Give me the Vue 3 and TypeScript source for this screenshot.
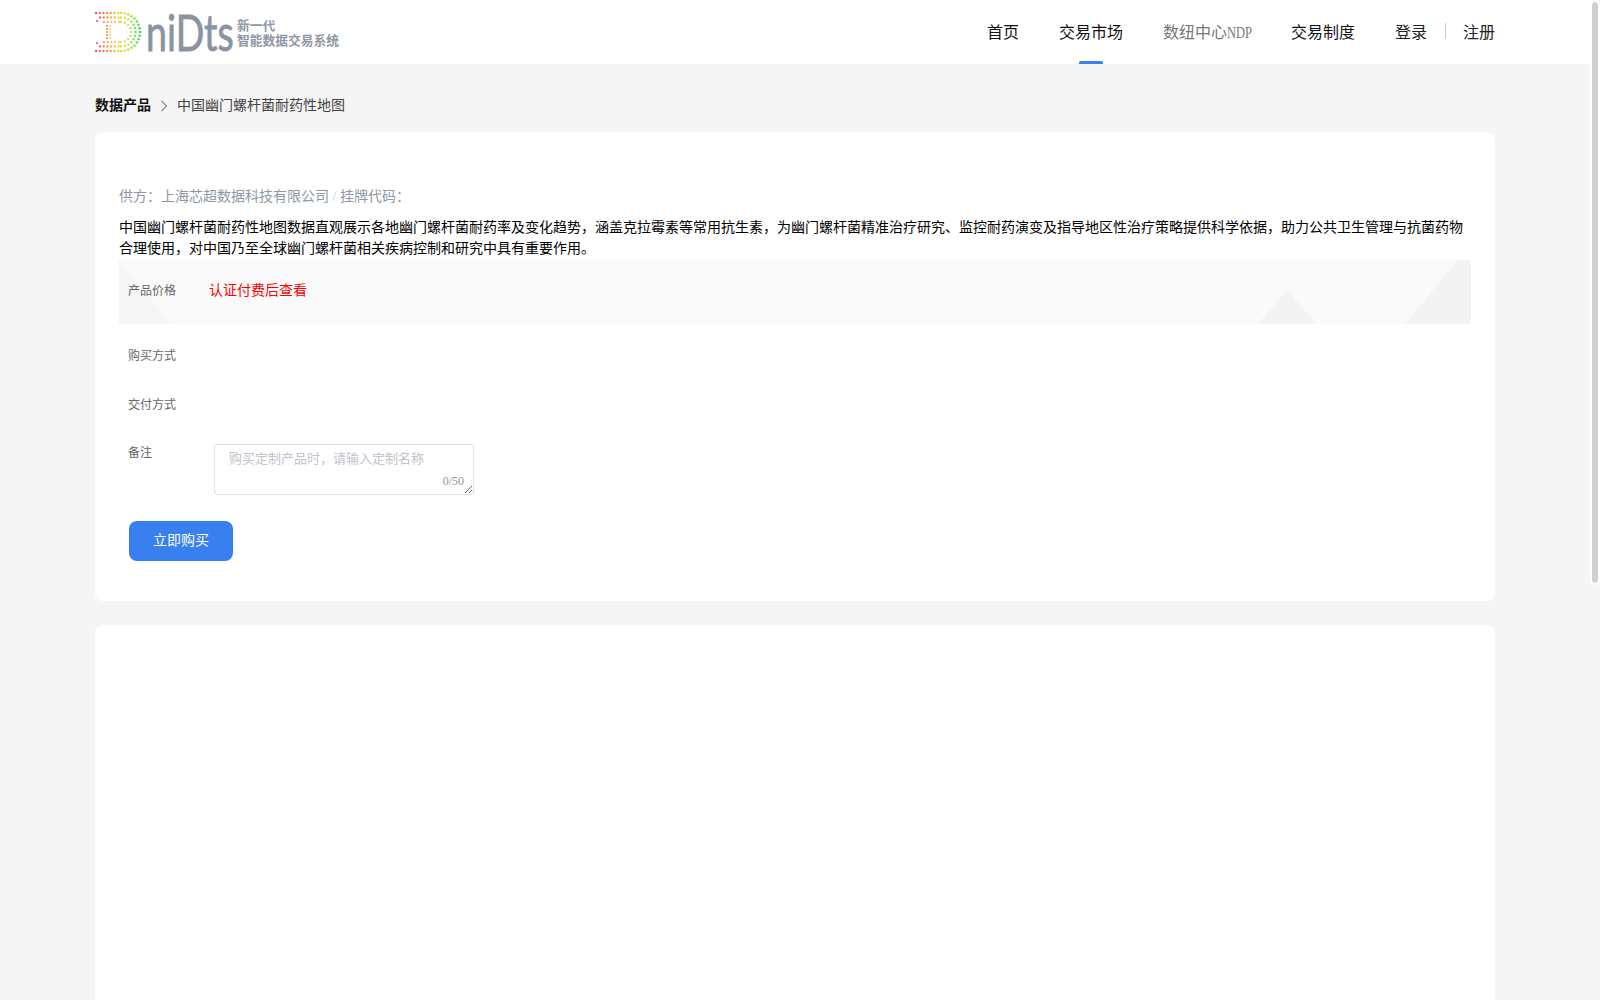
<script setup lang="ts">
interface Dot { x: number; y: number; r: number; c: string }

const stops: [number, number[]][] = [
  [0, [250, 70, 120]],
  [0.28, [250, 150, 70]],
  [0.55, [245, 215, 40]],
  [0.78, [170, 225, 50]],
  [1, [50, 220, 100]],
]
function colorAt(x: number): string {
  const t = Math.min(1, Math.max(0, (x - 1) / 44))
  for (let i = 1; i < stops.length; i++) {
    if (t <= stops[i][0]) {
      const [a, ca] = stops[i - 1]
      const [b, cb] = stops[i]
      const k = (t - a) / (b - a)
      const m = ca.map((v, j) => Math.round(v + (cb[j] - v) * k))
      return `rgb(${m[0]},${m[1]},${m[2]})`
    }
  }
  return 'rgb(50,220,100)'
}
const dots: Dot[] = []
function add(x: number, y: number, r: number) {
  dots.push({ x, y, r, c: colorAt(x) })
}
const cx = 26
const cy = 21
;[
  { rad: 19, from: 1, dot: 1.2 },
  { rad: 14.5, from: 5, dot: 1.15 },
  { rad: 10, from: 9, dot: 1.05 },
].forEach(({ rad, from, dot }) => {
  for (let x = from; x < cx; x += 3.7) {
    add(x, cy - rad, dot)
    add(x, cy + rad, dot)
  }
  const n = Math.round((Math.PI * rad) / 3.7)
  for (let i = 0; i <= n; i++) {
    const a = -Math.PI / 2 + (Math.PI * i) / n
    add(cx + rad * Math.cos(a), cy + rad * Math.sin(a), dot)
  }
})
for (let y = 15; y <= 27; y += 3) {
  add(12, y, 1)
  add(15, y, 0.8)
}
add(2, 10, 1.1)
add(2, 32, 1.1)
</script>

<template>
  <div class="page">
    <header class="topbar">
      <div class="logo">
        <svg class="logo-mark" width="48" height="42" viewBox="0 0 48 42">
          <circle v-for="(d, i) in dots" :key="i" :cx="d.x" :cy="d.y" :r="d.r" :fill="d.c" />
        </svg>
        <div class="logo-word"><span>niDts</span></div>
        <div class="logo-sub">
          <span>新一代</span>
          <span>智能数据交易系统</span>
        </div>
      </div>
      <nav class="nav">
        <a class="nav-item">首页</a>
        <a class="nav-item active">交易市场</a>
        <a class="nav-item muted">数纽中心<span class="narrow"><span>NDP</span></span></a>
        <a class="nav-item">交易制度</a>
      </nav>
      <div class="auth">
        <a>登录</a>
        <i class="sep"></i>
        <a>注册</a>
      </div>
    </header>

    <main class="main">
      <div class="crumbs">
        <b>数据产品</b>
        <svg class="chev" width="8" height="12" viewBox="0 0 8 12">
          <path d="M1.5 1 L6.5 6 L1.5 11" fill="none" stroke="#888" stroke-width="1.1" />
        </svg>
        <span>中国幽门螺杆菌耐药性地图</span>
      </div>

      <section class="card product">
        <p class="supplier">供方：上海芯超数据科技有限公司 <em>/</em> 挂牌代码：</p>
        <p class="desc">中国幽门螺杆菌耐药性地图数据直观展示各地幽门螺杆菌耐药率及变化趋势，涵盖克拉霉素等常用抗生素，为幽门螺杆菌精准治疗研究、监控耐药演变及指导地区性治疗策略提供科学依据，助力公共卫生管理与抗菌药物合理使用，对中国乃至全球幽门螺杆菌相关疾病控制和研究中具有重要作用。</p>

        <div class="price-band">
          <svg class="band-art" viewBox="0 0 1352 64" preserveAspectRatio="none" aria-hidden="true">
            <polygon points="0,0 52,64 0,64" fill="#f6f6f6" />
            <polygon points="1139,64 1168,30 1198,64" fill="#f3f3f3" />
            <polygon points="1339,0 1352,0 1352,64 1286,64" fill="#f3f3f3" />
          </svg>
          <span class="label">产品价格</span>
          <span class="price">认证付费后查看</span>
        </div>

        <div class="row"><span class="label">购买方式</span></div>
        <div class="row"><span class="label">交付方式</span></div>
        <div class="row note">
          <span class="label">备注</span>
          <div class="note-box">
            <textarea maxlength="50" placeholder="购买定制产品时，请输入定制名称"></textarea>
            <span class="count">0/50</span>
          </div>
        </div>

        <button class="buy" type="button">立即购买</button>
      </section>

      <section class="card detail"></section>
    </main>
    <div class="scroll-thumb"></div>
  </div>
</template>

<style scoped>
.page {
  background: #f5f5f5;
  font-family: "Liberation Serif", "Noto Sans CJK SC", serif;
  color: #000;
  padding-right: 8px;
}
.topbar {
  height: 64px;
  background: #fff;
  display: flex;
  align-items: center;
  padding: 0 97px 0 95px;
}
.logo {
  display: flex;
  align-items: center;
  flex: 1;
  height: 64px;
}
.logo-mark {
  flex: none;
  margin: -1px 3px 0 0;
}
.logo-word {
  width: 91px;
  height: 46px;
  flex: none;
  color: #8a94a1;
}
.logo-word span {
  display: block;
  font-family: Lato, sans-serif;
  font-weight: 400;
  font-size: 50px;
  line-height: 46px;
  -webkit-text-stroke: 0.8px #8a94a1;
  transform: scaleX(0.75);
  transform-origin: left center;
  white-space: nowrap;
}
.logo-sub {
  display: flex;
  flex-direction: column;
  font-size: 12.75px;
  font-weight: 700;
  line-height: 15px;
  color: #8f98a4;
  margin-top: 4px;
}
.nav {
  display: flex;
  gap: 40px;
  height: 64px;
}
.nav-item {
  position: relative;
  height: 64px;
  font-size: 16px;
  line-height: 65px;
  color: #111;
}
.nav-item.muted {
  color: #777;
}
.narrow {
  display: inline-block;
  width: 24px;
}
.narrow span {
  display: inline-block;
  transform: scaleX(0.78);
  transform-origin: left center;
}
.nav-item.active::after {
  content: "";
  position: absolute;
  left: 50%;
  bottom: 0;
  width: 24px;
  height: 3px;
  margin-left: -12px;
  background: #3880ef;
  border-radius: 2px 2px 0 0;
}
.auth {
  display: flex;
  align-items: center;
  height: 64px;
  line-height: 65px;
  margin-left: 40px;
  font-size: 16px;
  color: #222;
}
.sep {
  width: 1px;
  height: 16px;
  margin: -2px 17px 0 18px;
  background: #ccc;
}
.main {
  padding: 0 97px 30px 95px;
}
.crumbs {
  height: 68px;
  padding-top: 31px;
  box-sizing: border-box;
  display: flex;
  align-items: flex-start;
  font-size: 14px;
  line-height: 21px;
  color: #444;
}
.crumbs b {
  color: #111;
}
.chev {
  margin: 5px 9px 0 9px;
}
.card {
  background: #fff;
  border-radius: 8px;
}
.product {
  padding: 54px 24px 40px;
  height: 469px;
  box-sizing: border-box;
}
.supplier {
  margin: 0 0 10px;
  font-size: 14px;
  line-height: 21px;
  color: #8d97a5;
}
.supplier em {
  font-style: normal;
  color: #c5cad2;
}
.desc {
  margin: 0 0 1px;
  font-size: 14px;
  line-height: 21px;
  color: #000;
}
.price-band {
  position: relative;
  height: 64px;
  display: flex;
  align-items: center;
  background: #fafafa;
  padding-left: 9px;
  margin-bottom: 7px;
}
.band-art {
  position: absolute;
  inset: 0;
  width: 100%;
  height: 100%;
}
.label {
  position: relative;
  font-size: 12px;
  line-height: 18px;
  color: #666;
  width: 81px;
  flex: none;
}
.price-band .label,
.price {
  top: -1px;
}
.price {
  position: relative;
  font-size: 14px;
  line-height: 18px;
  color: #f00;
}
.row {
  display: flex;
  height: 49px;
  align-items: center;
  padding-left: 9px;
}
.row.note {
  height: auto;
  align-items: flex-start;
  margin-top: 15px;
}
.note .label {
  width: 86px;
}
.note-box {
  position: relative;
  width: 260px;
  height: 51px;
}
.note-box textarea {
  display: block;
  box-sizing: border-box;
  width: 260px;
  height: 51px;
  padding: 4px 14px;
  border: 1px solid #dcdfe6;
  border-radius: 4px;
  outline: none;
  font-family: inherit;
  font-size: 13px;
  line-height: 19px;
  color: #606266;
  background: #fff;
}
.note-box textarea::placeholder {
  color: #c0c4cc;
}
.count {
  position: absolute;
  right: 10px;
  bottom: 7px;
  font-size: 12px;
  line-height: 14px;
  color: #909399;
}
.buy {
  display: block;
  width: 104px;
  height: 40px;
  margin: 26px 0 0 10px;
  padding: 0 0 4px;
  border: 0;
  border-radius: 8px;
  background: #3880ef;
  color: #fff;
  font-family: inherit;
  font-size: 14px;
}
.detail {
  margin-top: 24px;
  height: 1060px;
}
.scroll-thumb {
  position: fixed;
  top: 0;
  right: 0;
  width: 10px;
  height: 585px;
  box-sizing: border-box;
  border: 2px solid #fff;
  background: #d0d0d0;
  background-clip: padding-box;
  border-radius: 5px;
}
</style>

<style>
body {
  margin: 0;
}
</style>
